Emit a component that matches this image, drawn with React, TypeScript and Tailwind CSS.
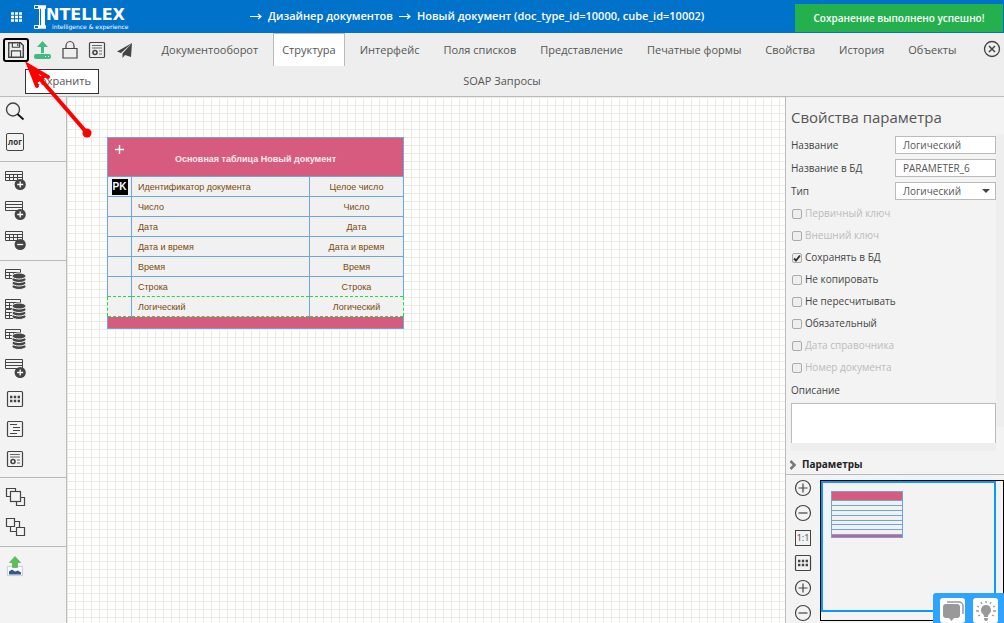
import type { ReactNode } from "react";

const sans = "font-['Open_Sans','Noto_Sans',sans-serif]";

function Icon({ size = 22, children }: { size?: number; children: ReactNode }) {
  return (
    <svg width={size} height={size} viewBox="0 0 22 22" fill="none" stroke="#444" strokeWidth="1.2" aria-hidden="true">
      {children}
    </svg>
  );
}

/* small table glyph, reused by most of the sidebar tools */
function Grid({ y = 1, w = 17, cols = true }: { y?: number; w?: number; cols?: boolean }) {
  return (
    <g strokeWidth="1">
      <path d={`M1.5 ${y + 0.5}h${w}v9h-${w}z`} fill="#f3f3f3" />
      <path d={`M1 ${y + 3.5}h${w}M1 ${y + 6.5}h${w}`} />
      {cols && <path d={`M5.5 ${y + 3}v6M9.5 ${y + 3}v6M13.5 ${y + 3}v6`} />}
    </g>
  );
}

function Badge({ minus = false }: { minus?: boolean }) {
  return (
    <g>
      <circle cx="16.2" cy="14.5" r="5.600" fill="#444" stroke="none" />
      <path d={minus ? "M13.2 14.5h6" : "M13.2 14.5h6M16.2 11.5v6"} stroke="#fff" strokeWidth="1.3" />
    </g>
  );
}

function Database() {
  return (
    <g stroke="#f3f3f3" strokeWidth="1" fill="#444">
      <ellipse cx="15" cy="18.5" rx="7" ry="3" />
      <ellipse cx="15" cy="15" rx="7" ry="3" />
      <ellipse cx="15" cy="11.5" rx="7" ry="3" />
      <ellipse cx="15" cy="8" rx="7" ry="3" />
    </g>
  );
}

function DocIcon() {
  return (
    <Icon>
      <rect x="3.5" y="3.5" width="15" height="15" rx="1" />
      <path d="M6 6.5h10M6 9h10M13 12h3M13 15h3" strokeWidth=".8" />
      <circle cx="9" cy="13.5" r="2" strokeWidth="1.6" />
    </Icon>
  );
}

function DotsIcon() {
  return (
    <Icon>
      <rect x="3.5" y="3.5" width="15" height="15" rx="1" />
      <path d="M6 9h10M6 13h10" strokeWidth="2.4" strokeDasharray="2.4 1.4" />
    </Icon>
  );
}

const groups: { pad: string; tools: { name: string; icon: ReactNode }[] }[] = [
  {
    pad: "pb-1",
    tools: [
      { name: "Поиск", icon: <Icon><circle cx="9" cy="8.5" r="6.5" strokeWidth="1.4" /><path d="M13.5 13l6 5.5" strokeWidth="1.8" stroke="#111" /></Icon> },
      { name: "Лог", icon: <span className="flex h-[18px] w-[18px] items-center justify-center rounded-[2px] border border-[#444] text-[8px] font-bold leading-none text-[#333]">лог</span> },
    ],
  },
  {
    pad: "py-1",
    tools: [
      { name: "Добавить таблицу", icon: <Icon><Grid /><Badge /></Icon> },
      { name: "Добавить строку", icon: <Icon><Grid cols={false} /><Badge /></Icon> },
      { name: "Удалить таблицу", icon: <Icon><Grid /><Badge minus /></Icon> },
    ],
  },
  {
    pad: "py-[3px]",
    tools: [
      { name: "База данных", icon: <Icon><Grid w={15} /><Database /></Icon> },
      { name: "Таблицы базы", icon: <Icon><Grid y={1} w={15} /><Grid y={11} w={15} /><Database /></Icon> },
      { name: "Загрузить из базы", icon: <Icon><Grid w={15} /><Database /></Icon> },
      { name: "Добавить поле", icon: <Icon><Grid cols={false} /><Badge /></Icon> },
      { name: "Сетка", icon: <DotsIcon /> },
      { name: "Дерево", icon: <Icon><rect x="3.5" y="3.5" width="15" height="15" rx="1" /><path d="M6 6.5h7M9 9.5h7M9 12.5h7M6 15.5h7" strokeWidth="1" /></Icon> },
      { name: "Документ", icon: <DocIcon /> },
    ],
  },
  {
    pad: "py-1",
    tools: [
      { name: "На передний план", icon: <Icon><path d="M2.5 2.5h9v8h-9zM12.5 11.5h8v8h-8z" /><rect x="6.5" y="5.5" width="10" height="10" fill="#f3f3f3" /></Icon> },
      { name: "На задний план", icon: <Icon><path d="M6.5 5.5h9v10h-9z" /><path d="M2.5 2.5h8v8h-8zM12.5 11.5h8v8h-8z" fill="#f3f3f3" /></Icon> },
    ],
  },
  {
    pad: "py-1",
    tools: [
      {
        name: "Выгрузить изображение",
        icon: (
          <Icon>
            <rect x="3.5" y="11.5" width="15" height="9" fill="#fff" stroke="#c8d4e4" />
            <path d="M5 19.5v-3l3-2 3 2 3-1 3 2v2z" fill="#335a8c" stroke="none" />
            <path d="M11 1.5l5.5 6h-3v5h-5v-5h-3z" fill="#5cbf58" stroke="#4aa54a" strokeWidth=".6" />
          </Icon>
        ),
      },
    ],
  },
];

const tabs = ["Документооборот", "Структура", "Интерфейс", "Поля списков", "Представление", "Печатные формы", "Свойства", "История", "Объекты"];

const rows = [
  ["Идентификатор документа", "Целое число"],
  ["Число", "Число"],
  ["Дата", "Дата"],
  ["Дата и время", "Дата и время"],
  ["Время", "Время"],
  ["Строка", "Строка"],
  ["Логический", "Логический"],
];

const flags = [
  { label: "Первичный ключ", disabled: true },
  { label: "Внешний ключ", disabled: true },
  { label: "Сохранять в БД", checked: true },
  { label: "Не копировать" },
  { label: "Не пересчитывать" },
  { label: "Обязательный" },
  { label: "Дата справочника", disabled: true },
  { label: "Номер документа", disabled: true },
];

function ZoomIcon({ minus = false }: { minus?: boolean }) {
  return (
    <Icon>
      <circle cx="11" cy="11" r="7.5" />
      <path d={minus ? "M6.5 11h9" : "M6.5 11h9M11 6.5v9"} />
    </Icon>
  );
}

function Arrow() {
  return (
    <svg width="12" height="7" viewBox="0 0 12 7" fill="none" stroke="#fff" strokeWidth="1.2" aria-hidden="true">
      <path d="M0 3.5h11M8 1l3 2.5L8 6" />
    </svg>
  );
}

function Header() {
  return (
    <header className="relative flex h-[33px] shrink-0 items-center bg-[#0072c9] text-white">
      <button aria-label="Меню" className="ml-[11px]">
        <svg width="11" height="10" viewBox="0 0 11 10" stroke="#fff" strokeWidth="2.4" strokeDasharray="3 1" aria-hidden="true">
          <path d="M0 1.5h11M0 5h11M0 8.5h11" />
        </svg>
      </button>
      <a href="#" className="ml-3 flex items-center">
        <svg width="12" height="24" viewBox="0 0 12 24" fill="none" stroke="#fff" aria-hidden="true">
          <path d="M5 .5H.5v3H5M5 20.5H.5v3H5M5.500 3.5v17" strokeWidth="1" />
          <path d="M4 2h10M4 22h10" strokeWidth="3.5" />
          <path d="M9 1v22" strokeWidth="4" />
        </svg>
        <span className="flex flex-col pt-1 font-['DejaVu_Sans',sans-serif]">
          <span className="text-[16px] font-bold leading-4">NTELLEX</span>
          <span className="pl-[6px] text-[6px] leading-[7px]">intelligence &amp; experience</span>
        </span>
      </a>
      <div className="absolute left-[250px] flex items-center gap-[6px] whitespace-nowrap text-[11px] font-semibold">
        <Arrow />
        <a href="#">Дизайнер документов</a>
        <Arrow />
        <span>Новый документ (doc_type_id=10000, cube_id=10002)</span>
      </div>
      <div role="status" className="absolute right-px top-1 flex h-7 w-[208px] items-center justify-center whitespace-nowrap bg-[#24b14d] text-[10px] font-semibold">
        Сохранение выполнено успешно!
      </div>
    </header>
  );
}

function Toolbar() {
  const tool = "flex h-6 w-[26px] items-center justify-center";
  return (
    <div className="shrink-0 border-b border-[#bbb] bg-[#eee] text-[11px] text-[#555]">
      <div className="flex h-[33px] items-center">
        <div className="flex shrink-0 items-center gap-px pl-[3px]">
          <button aria-label="Сохранить" className={`${tool} rounded-[3px] border-2 border-black`}>
            <Icon size={20}>
              <path d="M3 3h13l3 3v13H3z" strokeWidth="1.6" />
              <path d="M7 3v5h8V3M6 19v-7h10v7M13 4v3" strokeWidth="1.3" />
            </Icon>
          </button>
          <button aria-label="Загрузить" className={tool}>
            <Icon>
              <path d="M10.5 2l5.5 6h-4v6H9V8H5z" fill="#42bb83" stroke="none" />
              <rect x="2" y="15" width="17" height="5" rx="2" fill="#42bb83" stroke="none" />
              <path d="M13 17.5h1M16 17.5h1" stroke="#fff" />
            </Icon>
          </button>
          <button aria-label="Заблокировать" className={tool}>
            <Icon>
              <path d="M4 9.5h14v9.5H4zM7 9V7a4 4.5 0 018 0v2" />
            </Icon>
          </button>
          <button aria-label="Документ" className={tool}><DocIcon /></button>
          <button aria-label="Отправить" className={tool}>
            <Icon>
              <path d="M19 4L4 12.5l4 1.5zM19 4L9.5 14.5V19l2.5-3 6 2z" fill="#444" stroke="none" />
            </Icon>
          </button>
        </div>
        <nav className="flex h-full grow justify-center gap-[6px]">
          {tabs.map((t) => (
            <a
              key={t}
              href="#"
              className={
                t === "Структура"
                  ? "flex items-center whitespace-nowrap border border-b-0 border-[#bbb] bg-white px-2"
                  : "flex items-center whitespace-nowrap border border-b-0 border-transparent px-2"
              }
            >
              {t}
            </a>
          ))}
        </nav>
        <button aria-label="Закрыть" className="mr-px shrink-0">
          <Icon>
            <circle cx="11" cy="10" r="7.5" strokeWidth="1.3" />
            <path d="M8 7l6 6M14 7l-6 6" strokeWidth="1.5" />
          </Icon>
        </button>
      </div>
      <div className="flex h-[30px] items-center justify-center">
        <a href="#">SOAP Запросы</a>
      </div>
    </div>
  );
}

function Canvas() {
  const line = "border-x border-t border-[#6ca6dc]";
  return (
    <main className="relative min-w-0 grow overflow-hidden bg-white bg-[linear-gradient(#e9ebe0_1px,transparent_1px),linear-gradient(90deg,#e9ebe0_1px,transparent_1px)] bg-[size:8px_8px]">
      <div className="absolute left-10 top-10 font-['Liberation_Sans',sans-serif]">
        <table className="w-[297px] table-fixed border-collapse text-[9px] leading-3 text-[#7a4a0c]">
          <colgroup>
            <col className="w-6" />
            <col />
            <col className="w-[94px]" />
          </colgroup>
          <thead>
            <tr className={`${line} h-[39px] bg-[#d75b7e]`}>
              <th colSpan={3} className="p-0 pt-1 font-bold text-[#f3e9ec]">
                Основная таблица Новый документ
              </th>
            </tr>
          </thead>
          <tbody>
            {rows.map(([name, type], i) => (
              <tr key={name} className={i === 6 ? "h-5 border border-dashed border-[#22d840] bg-[#f1f1f1]" : `${line} h-5 bg-[#f1f1f1]`}>
                <td className="border-r border-[#6ca6dc] p-0">
                  {i === 0 && <span className="mx-auto flex h-4 w-4 items-center justify-center bg-black text-[10px] font-bold text-white">PK</span>}
                </td>
                <td className="border-r border-[#6ca6dc] p-0 pl-[6px]">{name}</td>
                <td className="p-0 text-center">{type}</td>
              </tr>
            ))}
          </tbody>
          <tfoot>
            <tr className="h-3 border-x border-b border-[#6ca6dc] bg-[#d75b7e]">
              <td colSpan={3} className="p-0" />
            </tr>
          </tfoot>
        </table>
        <button aria-label="Добавить параметр" className="absolute left-2 top-2">
          <svg width="9" height="9" viewBox="0 0 9 9" stroke="#fff" strokeWidth="1.4" aria-hidden="true">
            <path d="M0 4.5h9M4.5 0v9" />
          </svg>
        </button>
      </div>
    </main>
  );
}

function Properties() {
  const row = "relative flex h-[23px] items-center justify-between";
  const field = "h-[18px] w-[101px] border border-[#bbb] bg-white px-[7px] text-[10px] text-[#555] outline-none";
  return (
    <aside className="flex w-[219px] shrink-0 flex-col border-l border-[#bbb] bg-[#f3f3f3] text-[10px] text-[#444]">
      <h2 className="flex h-[37px] items-center pl-[5px] pt-[3px] text-[15px] text-[#555]">Свойства параметра</h2>
      <div className="flex">
        <form className="grow pl-[5px]">
          <div className={row}>
            <label htmlFor="name">Название</label>
            <input id="name" className={field} defaultValue="Логический" />
          </div>
          <div className={row}>
            <label htmlFor="db">Название в БД</label>
            <input id="db" className={field} defaultValue="PARAMETER_6" />
          </div>
          <div className={row}>
            <label htmlFor="type">Тип</label>
            <select id="type" className={`${field} appearance-none`} defaultValue="Логический">
              <option>Логический</option>
            </select>
            <span className="pointer-events-none absolute right-[6px] border-x-4 border-t-4 border-x-transparent border-t-[#444]" />
          </div>
          {flags.map((f) => (
            <label key={f.label} className={f.disabled ? "flex h-[22px] items-center text-[#bbb]" : "flex h-[22px] items-center"}>
              <span className="relative mr-[3px] flex">
                <input
                  type="checkbox"
                  defaultChecked={f.checked}
                  disabled={f.disabled}
                  className="peer ml-px h-[10px] w-[10px] appearance-none rounded-[2px] border border-[#aaa] bg-[#eee]"
                />
                <svg className="pointer-events-none absolute left-px top-0 hidden peer-checked:block" width="10" height="10" viewBox="0 0 10 10" fill="none" stroke="#333" strokeWidth="2" aria-hidden="true">
                  <path d="M2 5.5l2 2L8 2.5" />
                </svg>
              </span>
              {f.label}
            </label>
          ))}
          <label htmlFor="desc" className="flex h-6 items-center">Описание</label>
          <textarea id="desc" className="block h-10 w-full resize-none border border-b-0 border-[#bbb] bg-white" />
          <div className="h-2 bg-[#eee]" />
        </form>
        <div className="mb-6 w-2 shrink-0 bg-[#eee]" />
      </div>
      <button className="flex h-6 shrink-0 items-center gap-[5px] border-b border-[#bbb] pl-[3px] pt-[5px] text-[10px] font-bold text-[#222]">
        <svg width="8" height="10" viewBox="0 0 8 10" fill="none" stroke="#777" strokeWidth="2.5" aria-hidden="true">
          <path d="M1.5 1l4 4-4 4" />
        </svg>
        Параметры
      </button>
      <div className="flex min-h-0 grow">
        <div className="flex w-[34px] shrink-0 flex-col items-center gap-[3px] pt-[2px]">
          <button aria-label="Увеличить"><ZoomIcon /></button>
          <button aria-label="Уменьшить"><ZoomIcon minus /></button>
          <button className="my-[3px] flex h-4 w-4 shrink-0 items-center justify-center border border-[#444] text-[9px] leading-none">1:1</button>
          <button aria-label="Сетка"><DotsIcon /></button>
          <button aria-label="Увеличить шаг"><ZoomIcon /></button>
          <button aria-label="Уменьшить шаг"><ZoomIcon minus /></button>
        </div>
        <div className="mb-[2px] mt-[5px] grow border border-black pb-2 pr-[7px]">
          <div className="h-full border-2 border-[#0a97ff] p-2">
            <svg width="72" height="47" viewBox="0 0 72 47" aria-hidden="true">
              <rect x=".5" y=".5" width="71" height="46" fill="#f1f1f1" stroke="#6ca6dc" />
              <path d="M1 1h70v8H1zM1 44h70v2H1z" fill="#d75b7e" />
              <path d="M1 9.5h70M1 14.5h70M1 19.5h70M1 24.5h70M1 29.5h70M1 33.5h70M1 38.5h70M1 43.5h70" stroke="#6ca6dc" />
            </svg>
          </div>
        </div>
      </div>
    </aside>
  );
}

export default function App() {
  return (
    <div className={`relative flex h-screen flex-col overflow-hidden ${sans}`}>
      <Header />
      <Toolbar />
      <div className="flex min-h-0 grow">
        <aside className="w-[67px] shrink-0 overflow-hidden border-r border-[#bbb] bg-[#f3f3f3]">
          {groups.map((g, i) => (
            <div key={i} className={`border-b border-[#bbb] last:border-b-0 ${g.pad}`}>
              {g.tools.map((t) => (
                <button key={t.name} aria-label={t.name} className="ml-1 flex h-[30px] w-[22px] items-center justify-center">
                  {t.icon}
                </button>
              ))}
            </div>
          ))}
        </aside>
        <Canvas />
        <Properties />
      </div>

      <div role="tooltip" className="absolute left-[25px] top-[69px] flex h-[25px] w-[74px] items-center justify-center border border-[#333] bg-white text-[11px] text-[#555]">
        Сохранить
      </div>
      <svg className="pointer-events-none absolute left-0 top-[60px]" width="100" height="80" viewBox="0 60 100 80" fill="none" stroke="#f00" strokeWidth="4" strokeLinecap="round" aria-hidden="true">
        <path d="M87 133L30 67M48 77L29 66l8 20M33 70l5 10 5-3" />
        <circle cx="87" cy="133" r="4.5" fill="#f00" stroke="none" />
      </svg>

      <div className="absolute bottom-0 right-0 flex h-[30px] w-[71px] gap-2 rounded-tl-[3px] bg-[#2ea3ff] pl-[7px] pt-[5px]">
        <button aria-label="Чат" className="flex h-[25px] w-[25px] items-center justify-center rounded-[3px] bg-white">
          <svg width="22" height="22" viewBox="0 0 22 22" fill="#999" aria-hidden="true">
            <path d="M5 2h12a4 4 0 014 4v8" fill="none" stroke="#999" strokeWidth="1.5" />
            <path d="M4 4h11q3 0 3 3v8q0 3-3 3h-3l-2.5 3L7 18H4q-3 0-3-3V7q0-3 3-3z" />
          </svg>
        </button>
        <button aria-label="Подсказка" className="flex h-[25px] w-[25px] items-center justify-center rounded-[3px] bg-white">
          <svg width="22" height="22" viewBox="0 0 22 22" fill="#999" aria-hidden="true">
            <path d="M11 5a5 5 0 00-3 9q1 1 1 3h4q0-2 1-3a5 5 0 00-3-9zM9 18h4v1l-1 2h-2l-1-2z" />
            <path d="M11 1v2M6 2l1 2M16 2l-1 2M2 6l2 1M20 6l-2 1M1 11h3M18 11h3M3 16l2-1M19 16l-2-1" stroke="#999" strokeWidth="1.3" />
          </svg>
        </button>
      </div>
    </div>
  );
}
